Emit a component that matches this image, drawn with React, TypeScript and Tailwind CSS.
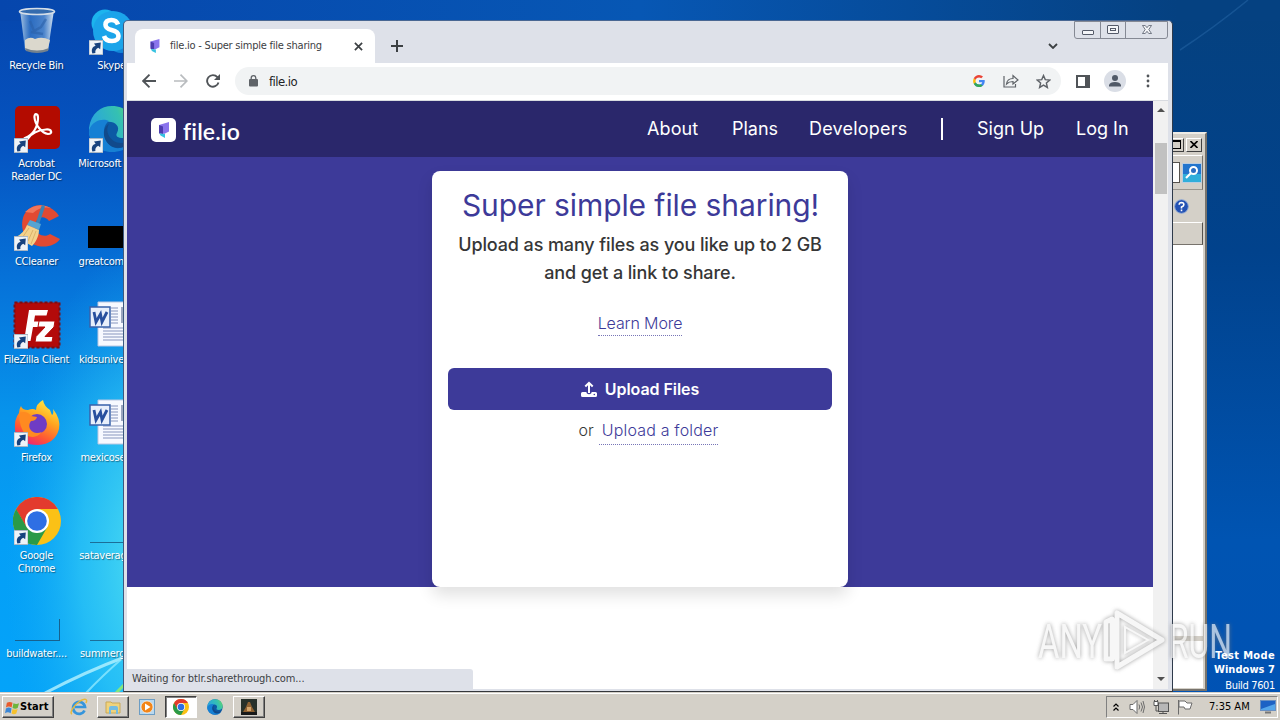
import type { ReactNode } from 'react';

type DesktopItem = {
  label: string;
  icon: ReactNode;
  shortcut?: boolean;
};

function ShortcutArrow() {
  return (
    <svg viewBox="0 0 14 14" className="absolute bottom-0 left-[1px] h-[15px] w-[14px]">
      <rect width="14" height="14" fill="#eef3f8" stroke="#a9b6c4" />
      <path d="M3.4 13C2 9 3.4 6 6.6 5.2L5 3.1 11.8 2 11.2 8.8 9.2 7.2C6.8 8.4 6 10 6.4 12.4Z" fill="#17427e" />
    </svg>
  );
}

function RecycleBinIcon() {
  return (
    <svg viewBox="0 0 48 48" className="h-12 w-12">
      <defs>
        <linearGradient id="bin" x1="0" x2="1">
          <stop offset="0" stopColor="#b9d2e8" stopOpacity=".9" />
          <stop offset=".3" stopColor="#3c7cc8" stopOpacity=".7" />
          <stop offset=".7" stopColor="#5b92d2" stopOpacity=".8" />
          <stop offset="1" stopColor="#dbe8f3" />
        </linearGradient>
      </defs>
      <path d="M7 3 12 43Q24 48 35 43L41 3Z" fill="url(#bin)" />
      <path d="M12 33Q17 29 22 32 29 29 37 33L35 42Q24 47 12 42Z" fill="#dbd8cd" />
      <path d="M12 41Q24 46 36 41L35 44Q24 48 13 44Z" fill="#74818d" />
      <path d="M17 14 21 24 28 20 33 12M18 25 30 27" stroke="#2b61a8" strokeWidth="2.4" fill="none" opacity=".6" />
      <ellipse cx="24" cy="4.5" rx="17.5" ry="3" fill="#356cae" stroke="#d5dee7" strokeWidth="1.6" />
    </svg>
  );
}

function SkypeIcon() {
  return (
    <svg viewBox="0 0 48 48" className="h-12 w-12">
      <circle cx="17" cy="16" r="13.500" fill="#1cb4ee" />
      <circle cx="33" cy="33" r="13" fill="#1386d8" />
      <circle cx="25" cy="24" r="20" fill="#1ba4ea" />
      <path d="M30 17.5Q28.5 13 23.5 13 17.5 13 17.5 17.8 17.5 21.5 23.5 23 30.5 24.6 30.5 29 30.5 34 24 34 17.5 34 16 29" fill="none" stroke="#fff" strokeWidth="4.6" />
    </svg>
  );
}

function AcrobatIcon() {
  return (
    <svg viewBox="0 0 48 48" className="h-12 w-12">
      <rect x="2" y="1" width="45" height="43" rx="5" fill="#b30b00" />
      <path
        d="M12 33C20 30 25 22 25 13 25 8 21 8 21.5 12.5 22 20 29 28 35 29 40 29 39 24 33 24.5 25 25 18 29 14.500 34 11 38 9 35 12 33Z"
        fill="none"
        stroke="#fff"
        strokeWidth="2.2"
      />
    </svg>
  );
}

function EdgeIcon({ className = 'h-12 w-12' }: { className?: string }) {
  return (
    <svg viewBox="0 0 48 48" className={className}>
      <defs>
        <linearGradient id="edgeTop" x1="0" x2="1" y1=".3">
          <stop offset="0" stopColor="#2aa5dc" />
          <stop offset=".6" stopColor="#35c1b1" />
          <stop offset="1" stopColor="#6bdc5a" />
        </linearGradient>
      </defs>
      <circle cx="24" cy="24" r="23" fill="#0c59a4" />
      <path d="M1 23C3 8 13 1 24 1 38 1 47 11 47 22 47 29 42 33 35 33 30 33 27 31 29 28 33 21 26 16 19 17 10 18 4 25 1 31Z" fill="url(#edgeTop)" />
      <path d="M1 25C5 15 15 13 21 16 14 21 14 34 23 41 28 45 37 43 43 38 38 45 31 47 24 47 10 47 0 37 1 25Z" fill="#1680d4" />
      <path d="M21 19C16 27 23 38 33 38 38 38 42 37 44 35 40 42 30 45 23 41 14 35 14 23 21 19Z" fill="#114a8b" />
    </svg>
  );
}

function CCleanerIcon() {
  return (
    <svg viewBox="0 0 48 48" className="h-12 w-12">
      <path
        d="M46 13C37 -1 18 -1 11 12 6 24 11 40 25 43 34 45 43 42 47 36L37 31C32 35 23 32 22 24 22 14 31 11 36 18Z"
        fill="#e24a32"
      />
      <path d="M12 9Q24 -2 38 5 28 3 20 10Z" fill="#f0765b" />
      <path d="M30 4 25 19" stroke="#3b83b5" strokeWidth="3.5" strokeLinecap="round" />
      <path d="M17 17 28 21 26 27 14 22Z" fill="#55a4d2" />
      <path d="M14 22 26 27C26 34 22 40 19 43L3 34Q11 30 14 22Z" fill="#f3d28c" />
      <path d="M16 25 9 35M20 27 15 38M23 28 18 41" stroke="#dcb26a" strokeWidth="1" />
    </svg>
  );
}

function FileZillaIcon() {
  return (
    <svg viewBox="0 0 48 48" className="h-12 w-12">
      <rect x="1.500" y="1.500" width="45" height="45" fill="#b30a0a" stroke="#7c0d12" strokeWidth="2" strokeDasharray="3 2" />
      <path d="M11 40 16 9H35L33.500 14.500H22L21 20.500H30L29 26H20L17.500 40Z" fill="#fff" />
      <path d="M26 20H42L41 26 32 35.500H40L39 41H22L23 35.500 32 26H25Z" fill="#fff" stroke="#b30a0a" strokeWidth="1" />
    </svg>
  );
}

function FirefoxIcon() {
  return (
    <svg viewBox="0 0 48 48" className="h-12 w-12">
      <defs>
        <linearGradient id="fox" x1=".8" x2=".3" y1="0" y2="1">
          <stop offset="0" stopColor="#fff04a" />
          <stop offset=".4" stopColor="#ffa620" />
          <stop offset=".75" stopColor="#ff5634" />
          <stop offset="1" stopColor="#ed2278" />
        </linearGradient>
      </defs>
      <path
        d="M8 7Q9 11 15 11 20 9 23 11 23 5 30 1 31 7 37 11 38 14 39 16 41 15 40 10 48 20 46 30 42 45 25 46 7 46 2 32 1 20 6 14 6 10 8 7Z"
        fill="url(#fox)"
      />
      <circle cx="24" cy="25" r="10" fill="#6f3cc4" />
      <path d="M6 14Q14 11 18 17L24 18Q23 22 18 22 15 26 17 30 21 36 29 33 22 41 13 36 6 29 6 14Z" fill="#ff8a20" />
    </svg>
  );
}

function ChromeIcon({ className = 'h-12 w-12' }: { className?: string }) {
  return (
    <svg viewBox="0 0 48 48" className={className}>
      <circle cx="24" cy="24" r="24" fill="#fbc116" />
      <path d="M3.200 12A24 24 0 0 0 24 48L34.400 30 24 36 13.600 30Z" fill="#2a9a48" />
      <path d="M3.200 12 13.600 30 24 24 24 12Z" fill="#2a9a48" />
      <path d="M3.200 12A24 24 0 0 1 44.800 12H24L13 20Z" fill="#e33b2e" />
      <path d="M3.200 12 13.600 30 14 18Z" fill="#e33b2e" />
      <circle cx="24" cy="24" r="12" fill="#fff" />
      <circle cx="24" cy="24" r="9.800" fill="#2e6fe4" />
    </svg>
  );
}

function WordIcon() {
  return (
    <svg viewBox="0 0 48 48" className="h-12 w-12">
      <path d="M10 1H46V45H10Z" fill="#f7f9ff" stroke="#bac7e2" />
      <path d="M23 7H30M23 10H30M23 13H30M23 16H30M23 19H30M23 22H30M15 27H44M15 30H44M15 33H44M15 36H44M15 39H44" stroke="#8795bd" />
      <path d="M33 6H44V22H33Z" fill="#9ba6bf" />
      <rect x="2" y="6" width="20" height="20" fill="#e8effb" stroke="#3962ab" strokeWidth="1.500" />
      <path d="M6 11 8 21 12.500 13 14 21 19 11" fill="none" stroke="#274f9e" strokeWidth="2.800" />
    </svg>
  );
}

function BlackIcon() {
  return (
    <div className="pt-[23px]">
      <div className="h-[22px] w-12 bg-black" />
    </div>
  );
}

function ThinIcon() {
  return <div className="ml-0.5 h-[46px] w-[46px] border-b border-[#1c6e98]" />;
}

function EmptyFileIcon() {
  return (
    <div className="flex h-[46px] w-12 items-end pl-0.5">
      <div className="h-[22px] w-[45px] border-r border-b border-[#17618e]" />
    </div>
  );
}

const leftColumn: DesktopItem[] = [
  { label: 'Recycle Bin', icon: <RecycleBinIcon /> },
  { label: 'Acrobat\nReader DC', icon: <AcrobatIcon />, shortcut: true },
  { label: 'CCleaner', icon: <CCleanerIcon />, shortcut: true },
  { label: 'FileZilla Client', icon: <FileZillaIcon />, shortcut: true },
  { label: 'Firefox', icon: <FirefoxIcon />, shortcut: true },
  { label: 'Google\nChrome', icon: <ChromeIcon />, shortcut: true },
  { label: 'buildwater....', icon: <EmptyFileIcon /> },
];

const rightColumn: DesktopItem[] = [
  { label: 'Skype', icon: <SkypeIcon />, shortcut: true },
  { label: 'Microsoft Ed...', icon: <EdgeIcon />, shortcut: true },
  { label: 'greatcompa...', icon: <BlackIcon /> },
  { label: 'kidsuniversi...', icon: <WordIcon /> },
  { label: 'mexicoserv...', icon: <WordIcon /> },
  { label: 'sataverage....', icon: <ThinIcon /> },
  { label: 'summergro...', icon: <ThinIcon /> },
];

function IconColumn({ items }: { items: DesktopItem[] }) {
  return (
    <div className="flex w-[74px] flex-col">
      {items.map((item) => (
        <div key={item.label} className="flex h-[98px] flex-col items-center">
          <div className="relative h-12 w-12">
            {item.icon}
            {item.shortcut && <ShortcutArrow />}
          </div>
          <p className="mt-1 mr-px text-center text-[11px] leading-[13px] tracking-[-0.25px] whitespace-pre text-white [text-shadow:1px_1px_1px_#00000070]">
            {item.label}
          </p>
        </div>
      ))}
    </div>
  );
}

function Wallpaper() {
  return (
    <svg viewBox="0 0 1280 720" className="absolute inset-0 h-full w-full">
      <defs>
        <linearGradient id="sky" x1="0" x2="0" y1="0" y2="1">
          <stop offset="0" stopColor="#0646ad" />
          <stop offset=".2" stopColor="#0553c0" />
          <stop offset=".4" stopColor="#0674da" />
          <stop offset=".58" stopColor="#0794ec" />
          <stop offset=".75" stopColor="#049ff6" />
          <stop offset="1" stopColor="#04a4fa" />
        </linearGradient>
        <linearGradient id="night" x1="0" x2="0" y1="0" y2="1">
          <stop offset="0" stopColor="#05417f" />
          <stop offset=".35" stopColor="#01428c" />
          <stop offset=".75" stopColor="#0054b2" />
          <stop offset="1" stopColor="#0052b4" />
        </linearGradient>
        <linearGradient id="top" x1="0" x2="1">
          <stop offset="0" stopColor="#0646ad" />
          <stop offset=".5" stopColor="#0757b4" />
          <stop offset=".92" stopColor="#054181" />
        </linearGradient>
        <radialGradient id="glow">
          <stop offset="0" stopColor="#55e2f0" />
          <stop offset=".5" stopColor="#35ccf5" stopOpacity=".65" />
          <stop offset="1" stopColor="#14a8f0" stopOpacity="0" />
        </radialGradient>
      </defs>
      <rect width="700" height="720" fill="url(#sky)" />
      <rect x="700" width="580" height="720" fill="url(#night)" />
      <rect width="1280" height="21" fill="url(#top)" />
      <ellipse cx="155" cy="560" rx="150" ry="320" fill="url(#glow)" />
      <path d="M45 693Q85 672 125 657" stroke="#b6f2ff" strokeWidth="3" fill="none" opacity=".8" />
      <path d="M86 693Q102 676 125 656" stroke="#8de9ff" strokeWidth="2" fill="none" opacity=".8" />
      <path d="M116 693 125 684" stroke="#83e87e" strokeWidth="3" />
      <path d="M1180 50Q1215 27 1248 0" stroke="#2868a8" strokeWidth="1.500" fill="none" opacity=".5" />
    </svg>
  );
}

function FileMark({ className }: { className: string }) {
  return (
    <svg viewBox="0 0 14 18" className={className}>
      <path d="M2 4 12 1V10.500L7 13 2 11Z" fill="#8a74ec" />
      <path d="M2 4 6 5.500V13L2 12.500Z" fill="#4c3cae" />
      <path d="M2.500 12.500 8 13V17L3.500 14.500Z" fill="#35c2e0" />
    </svg>
  );
}

function ExplorerWindow() {
  return (
    <div className="absolute top-[132px] left-[900px] flex h-[559px] w-[307px] flex-col border-2 border-t-[#eeece6] border-r-[#77736c] border-b-[#77736c] border-l-white bg-[#d4d0c8] pr-0.5">
      <div className="flex h-[21px] items-center justify-end gap-0.5 pr-px">
        {['max', 'close'].map((name) => (
          <div key={name} className="flex h-[14px] w-4 items-center justify-center border border-t-white border-r-[#404040] border-b-[#404040] border-l-white bg-[#d4d0c8]">
            {name === 'max' ? (
              <div className="h-[9px] w-[9px] border border-t-2 border-black" />
            ) : (
              <svg viewBox="0 0 8 7" className="h-[7px] w-2">
                <path d="M.5 0 7.500 7M7.500 0 .5 7" stroke="#000" strokeWidth="1.600" />
              </svg>
            )}
          </div>
        ))}
      </div>
      <div className="flex h-[35px] items-center justify-end border border-white border-r-[#77736c] border-b-[#9a968e]">
        <div className="h-[21px] w-20 border border-[#55524d] bg-white" />
        <svg viewBox="0 0 20 20" className="ml-0.5 h-5 w-5">
          <rect x=".5" y=".5" width="19" height="19" fill="#2275cd" stroke="#b9cce0" />
          <path d="M1 11H19V19H1Z" fill="#30aeda" />
          <circle cx="11.500" cy="7.500" r="3.500" fill="#2b6dc0" stroke="#fff" strokeWidth="2" />
          <path d="M9 10 4 15" stroke="#fff" strokeWidth="2.200" />
        </svg>
      </div>
      <div className="flex h-8 items-center justify-end pr-3.5">
        <svg viewBox="0 0 16 16" className="h-[15px] w-[15px]">
          <circle cx="8" cy="8" r="7.300" fill="#2452b4" stroke="#8fa9d4" />
          <path d="M5.500 6.200Q5.600 3.800 8 3.800 10.500 3.900 10.500 6 10.500 7.300 8 8.600V10M8 11.300V13" fill="none" stroke="#fff" strokeWidth="1.700" />
        </svg>
      </div>
      <div className="h-[23px] border border-t-white border-r-[#55524d] border-b-[#77736c] border-l-white" />
      <div className="grow bg-white pt-[391px]">
        <div className="h-[5px] bg-[#d4d0c8]" />
      </div>
      <div className="h-px bg-[#d4d0c8]" />
    </div>
  );
}

function TabStrip() {
  return (
    <div className="relative flex h-[41px] items-end bg-[#dee1e9] pl-[9px]">
      <div className="flex h-[34px] w-60 items-center rounded-t-lg bg-white pl-[13px]">
        <FileMark className="h-4 w-3.5" />
        <span className="mt-px ml-2 w-[184px] text-[11px] tracking-[-0.23px] whitespace-nowrap text-[#3c4043]">file.io - Super simple file sharing</span>
        <svg viewBox="0 0 10 10" className="h-[9px] w-[9px]">
          <path d="M1 1 9 9M9 1 1 9" stroke="#3c4043" strokeWidth="1.900" />
        </svg>
      </div>
      <svg viewBox="0 0 12 12" className="mb-[11px] ml-4 h-3 w-3">
        <path d="M6 0V12M0 6H12" stroke="#3c4043" strokeWidth="2" />
      </svg>
      <svg viewBox="0 0 10 6" className="mr-[112px] mb-3.5 ml-auto h-1.5 w-2.5">
        <path d="M1 1 5 5 9 1" fill="none" stroke="#3c4043" strokeWidth="1.800" />
      </svg>
      <div className="absolute -top-px right-0.5 flex h-[18px] w-[94px] rounded-b-[3px] border border-[#858994]">
        <div className="flex w-[26px] justify-center border-r border-[#858994] pt-2">
          <div className="h-[5px] w-3 rounded-[1px] border border-[#555b69] bg-[#f4f5f8]" />
        </div>
        <div className="flex w-[25px] justify-center border-r border-[#858994] pt-[3px]">
          <div className="flex h-[9px] w-3 items-center justify-center rounded-[1px] border border-[#555b69] bg-[#f4f5f8]">
            <div className="h-[3px] w-1.5 border border-[#555b69]" />
          </div>
        </div>
        <svg viewBox="0 0 12 10" className="mt-[3px] ml-[15px] h-[9px] w-3">
          <path d="M1 .5H4L6 3 8 .5H11L8 5 11 9.500H8L6 7 4 9.500H1L4 5Z" fill="#f4f5f8" stroke="#555b69" strokeWidth=".9" />
        </svg>
      </div>
    </div>
  );
}

function Toolbar() {
  return (
    <div className="flex h-[38px] items-center border-b border-[#d8dbe0] bg-white pr-[18px] pb-px pl-[15px]">
      <svg viewBox="0 0 14 14" className="h-3.5 w-3.5" fill="none" stroke="#505458" strokeWidth="1.900">
        <path d="M14 7H1.500M7.500.7 1.200 7 7.500 13.300" />
      </svg>
      <svg viewBox="0 0 14 14" className="ml-[18px] h-3.5 w-3.5" fill="none" stroke="#b9bcbf" strokeWidth="1.700">
        <path d="M0 7H12.500M6.500.7 12.800 7 6.500 13.300" />
      </svg>
      <svg viewBox="0 0 14 14" className="ml-[18px] h-3.5 w-3.5">
        <path d="M12.500 8.500A5.800 5.800 0 1 1 11.400 3.200L12.500 4.500" fill="none" stroke="#505458" strokeWidth="1.900" />
        <path d="M14 0V6H8Z" fill="#505458" />
      </svg>
      <div className="ml-[15px] flex h-7 w-[826px] items-center rounded-full bg-[#f1f3f4] pr-2.5 pl-3.5">
        <svg viewBox="0 0 9 12" className="h-3 w-[9px]">
          <rect y="4" width="9" height="7.500" rx="1" fill="#5f6368" />
          <path d="M2.200 5V3A2.300 2.300 0 0 1 6.800 3V5" fill="none" stroke="#5f6368" strokeWidth="1.300" />
        </svg>
        <span className="mt-0.5 ml-[11px] grow text-[13px] tracking-[-0.55px] text-[#202124]">file.io</span>
        <svg viewBox="0 0 48 48" className="h-3 w-3">
          <path d="M24 19.500V28.500H37C35.500 34 31 38 24 38 18 38 13 34.500 11 29L3 35C7 43 15 48 24 48 37 48 47 39 47 24Q47 21.500 46.500 19.500Z" fill="#4285f4" />
          <path d="M11 29 3 35C7 43 15 48 24 48 30 48 35 46 39 43L31 36.500C23 40 14 37 11 29Z" fill="#34a853" />
          <path d="M3 13Q-2 24 3 35L11 29Q9.500 24 11 19Z" fill="#fbbc05" />
          <path d="M3 13C7 5 15 0 24 0Q33.500 0 40 6L33 13Q29.500 10 24 10C18 10 13 13.500 11 19Z" fill="#ea4335" />
        </svg>
        <svg viewBox="0 0 16 14" className="ml-[18px] h-3.5 w-4" fill="none" stroke="#5f6368" strokeWidth="1.200">
          <path d="M1 2V13H12.500V10M3.500 10C4 6 7 4.500 10 4.500V1.500L15 6 10 10V7.500C7.500 7.500 5.500 8 3.500 10Z" />
        </svg>
        <svg viewBox="0 0 24 24" className="ml-[17px] h-[15px] w-[15px]" fill="none" stroke="#5f6368" strokeWidth="2.300">
          <path d="M12 2.500 14.800 9 22 9.700 16.600 14.400 18.200 21.500 12 17.800 5.800 21.500 7.400 14.400 2 9.700 9.200 9Z" />
        </svg>
      </div>
      <div className="ml-[15px] h-[13px] w-3.5 border-2 border-r-[5px] border-[#505458]" />
      <div className="ml-3.5 h-[22px] w-[22px] rounded-full bg-[#dadee6]">
        <svg viewBox="0 0 22 22" className="h-full w-full" fill="#505967">
          <circle cx="11" cy="8" r="3" />
          <path d="M5 16.500V15Q6 12 11 12T17 15V16.500Z" />
        </svg>
      </div>
      <svg viewBox="0 0 4 14" className="ml-auto h-3.5 w-1" fill="#505458">
        <circle cx="2" cy="2" r="1.400" />
        <circle cx="2" cy="7" r="1.400" />
        <circle cx="2" cy="12" r="1.400" />
      </svg>
    </div>
  );
}

function FileIoPage() {
  return (
    <div className="relative flex w-[1026px] flex-col overflow-hidden bg-white font-[Inter,sans-serif]">
      <nav className="flex h-14 items-center bg-[#2a276b] pr-[23px] pb-px pl-6 text-[18px] text-white">
        <div className="mt-[3px] flex h-6 w-[25px] items-center justify-center rounded-[5px] bg-white">
          <FileMark className="h-[18px] w-3.5" />
        </div>
        <span className="mt-1 ml-[7px] font-[Lato,sans-serif] text-[23px] leading-6 font-semibold tracking-[0.15px]">file.io</span>
        <div className="ml-auto flex items-center">
          <a className="w-[85px] tracking-[0.1px]">About</a>
          <a className="w-[77px]">Plans</a>
          <a className="w-[132px] tracking-[0.2px]">Developers</a>
          <div className="h-[22px] w-0.5 bg-white" />
          <a className="ml-[34px] w-[99px]">Sign Up</a>
          <a className="w-[54px] whitespace-nowrap">Log In</a>
        </div>
      </nav>
      <main className="flex h-[430px] shrink-0 justify-center bg-[#3d3a99] pt-3.5">
        <section className="flex h-[416px] w-[416px] shrink-0 flex-col items-center rounded-lg bg-white px-4 text-[#363636] shadow-[0_8px_16px_#0000001f]">
          <h1 className="mt-3.5 pl-px text-[30px] leading-10 tracking-[-0.08px] whitespace-nowrap text-[#3d3a99]">Super simple file sharing!</h1>
          <p className="mt-1.5 text-center text-[18px] leading-7 font-medium tracking-[-0.12px] whitespace-nowrap">
            Upload as many files as you like up to 2 GB
            <br />
            and get a link to share.
          </p>
          <a className="mt-[27px] h-[22px] border-b border-dotted border-[#3d3a99]/70 text-[16px] leading-[19px] font-light tracking-[-0.1px] whitespace-nowrap text-[#3d3a99]">
            Learn More
          </a>
          <button className="mt-8 flex h-[42px] w-full items-center justify-center gap-2 rounded-md bg-[#3d3a99] text-[16px] font-semibold tracking-[-0.05px] text-white">
            <svg viewBox="0 0 16 16" className="h-4 w-4">
              <path d="M8 12V2M4.300 5.500 8 1.800 11.700 5.500" fill="none" stroke="#fff" strokeWidth="2" />
              <path d="M1.500 11H5.500V12Q8 14.500 10.500 12V11H14.500Q16 11 16 12.500V14.500Q16 16 14.500 16H1.500Q0 16 0 14.500V12.500Q0 11 1.500 11Z" fill="#fff" />
              <circle cx="13.300" cy="13.500" r=".8" fill="#3d3a99" />
            </svg>
            Upload Files
          </button>
          <div className="mt-2.5 flex gap-[5px] pl-[17px] text-[16px] leading-[21px] font-light whitespace-nowrap">
            or
            <a className="h-[25px] border-b border-dotted border-[#3d3a99]/70 pl-[3px] tracking-[0.17px] text-[#3d3a99]">Upload a folder</a>
          </div>
        </section>
      </main>
      <div className="absolute bottom-0 left-0 flex h-5 w-[346px] items-center rounded-tr-[3px] bg-[#dee1e9] pt-px pl-[5px] font-['DejaVu_Sans_Condensed','DejaVu_Sans',sans-serif] text-[11px] tracking-[-0.1px] text-[#3c4043]">
        Waiting for btlr.sharethrough.com...
      </div>
    </div>
  );
}

function BrowserWindow() {
  return (
    <div className="absolute top-5 left-[123px] flex h-[672px] w-[1050px] flex-col rounded-t-[5px] border border-t-[#496793] border-r-[#2e3a4b] border-b-[#35383d] border-l-[#3d5a80] bg-[#dee1e9] pt-px pr-0.5 pb-0.5 pl-0.5">
      <TabStrip />
      <div className="mr-0.5 ml-px flex grow flex-col">
        <Toolbar />
        <div className="flex h-[588px]">
          <FileIoPage />
          <div className="flex grow flex-col items-center bg-[#f1f1f1]">
            <div className="mt-[7px] border-x-4 border-b-4 border-x-transparent border-b-[#505050]" />
            <div className="mt-[31px] h-[51px] w-3 bg-[#c1c1c1]" />
            <div className="mt-auto mb-2 border-x-4 border-t-4 border-x-transparent border-t-[#505050]" />
          </div>
        </div>
      </div>
    </div>
  );
}

function Watermark() {
  return (
    <svg viewBox="0 0 200 70" className="absolute top-[605px] left-[1036px] h-[70px] w-[200px] opacity-70 drop-shadow-[0_0_2px_#777777]">
      <g fill="#f4f4f4" fontFamily="Roboto, sans-serif" fontSize="49">
        <text x="2" y="53" textLength="64" lengthAdjust="spacingAndGlyphs">ANY</text>
        <text x="133" y="53" textLength="63" lengthAdjust="spacingAndGlyphs">RUN</text>
      </g>
      <path d="M81 8V62L126 35ZM70 17V54H76V14Z" fill="none" stroke="#f4f4f4" strokeWidth="5" strokeLinejoin="round" />
      <path d="M89 22V48L112 35Z" fill="none" stroke="#f4f4f4" strokeWidth="2" />
    </svg>
  );
}

function Taskbar() {
  return (
    <div className="absolute inset-x-0 bottom-0 flex h-7 items-center border-t border-[#d4d0c8] bg-[#d4d0c8] pr-0.5 pl-0.5 text-[11px] text-black shadow-[inset_0_1px_0_#fff]">
      <div className="mt-px flex h-[22px] w-[52px] items-center border border-t-white border-r-[#404040] border-b-[#404040] border-l-white pl-0.5 font-bold shadow-[inset_-1px_-1px_0_#808080]">
        <svg viewBox="0 0 16 16" className="h-[15px] w-[15px]">
          <path d="M2 3Q5 1 8 3L7 8Q4 6 1 8Z" fill="#e85b2c" />
          <path d="M9 3.500Q12 5 15 3.500L13.500 8.500Q11 10 8 8.500Z" fill="#6eb53a" />
          <path d="M1 9Q4 7 7 9L6 14Q3 12 0 14Z" fill="#3b87d6" />
          <path d="M8 9.500Q10.500 11 13.500 9.500L12 14.500Q9.500 16 7 14.500Z" fill="#f6c12c" />
        </svg>
        <span className="mt-px tracking-[0.1px]">Start</span>
      </div>
      <svg viewBox="0 0 18 18" className="mt-px ml-4 h-[18px] w-[18px]">
        <path d="M14.500 12.500A6 6 0 1 1 15 9H5" fill="none" stroke="#3595dc" strokeWidth="2.700" />
        <path d="M2 16C-1 15 4 7 10 3 15 0 18 1 16 5" fill="none" stroke="#e7b93d" strokeWidth="1.500" />
      </svg>
      <div className="mt-px ml-[9px] flex h-[22px] w-8 items-center justify-center border border-t-white border-r-[#404040] border-b-[#404040] border-l-white shadow-[inset_-1px_-1px_0_#808080]">
        <svg viewBox="0 0 16 16" className="h-4 w-4">
          <path d="M1 3H6L7 4H15V14H1Z" fill="#f0d37c" stroke="#c9a958" />
          <path d="M4 15V9Q4 7 6 7H11Q13 7 13 9V15H11V11H6V15Z" fill="#74bce2" />
        </svg>
      </div>
      <svg viewBox="0 0 16 16" className="mt-px ml-2.5 h-4 w-4">
        <rect x=".5" y=".5" width="15" height="15" fill="#b9d8ee" stroke="#6c9dc4" />
        <circle cx="8" cy="8" r="6" fill="#f28518" stroke="#fff" strokeWidth=".6" />
        <path d="M6 4.500 11.500 8 6 11.500Z" fill="#fff" />
      </svg>
      <div className="mt-px ml-2.5 flex h-[22px] w-8 items-center justify-center border border-t-[#404040] border-r-white border-b-white border-l-[#404040] bg-white shadow-[inset_1px_1px_0_#808080]">
        <ChromeIcon className="h-4 w-4" />
      </div>
      <EdgeIcon className="mt-px ml-2.5 h-4 w-4" />
      <div className="mt-px ml-2.5 flex h-[22px] w-8 items-center justify-center border border-t-white border-r-[#404040] border-b-[#404040] border-l-white shadow-[inset_-1px_-1px_0_#808080]">
        <svg viewBox="0 0 16 16" className="h-4 w-4">
          <rect width="16" height="16" fill="#27312a" />
          <path d="M2 13 5 8 7 3H9L11 8 14 13Z" fill="#8f6232" />
          <path d="M6 8H10V12H6Z" fill="#d3a56a" />
          <path d="M0 13H16V16H0Z" fill="#17191a" />
        </svg>
      </div>
      <div className="mt-px ml-auto flex h-[22px] w-[172px] items-center border border-t-[#808080] border-r-white border-b-white border-l-[#808080] pl-1.5">
        <svg viewBox="0 0 6 8" className="h-2 w-1.5" fill="none" stroke="#000" strokeWidth="1.200">
          <path d="M.5 3.500 3 1 5.500 3.500M.5 7.500 3 5 5.500 7.500" />
        </svg>
        <svg viewBox="0 0 16 16" className="ml-2.5 h-4 w-4" stroke="#6b6b6b" fill="none">
          <path d="M1 5.500H4L8 1.500V14.500L4 10.500H1Z" fill="#fff" />
          <path d="M10 5.500Q11.500 8 10 10.500M12 3.500Q15 8 12 12.500M14 2Q17 8 14 14" />
        </svg>
        <svg viewBox="0 0 16 16" className="ml-2 h-4 w-4" stroke="#555">
          <rect x="5.500" y="4" width="10" height="8.500" fill="#b7b7b7" />
          <path d="M3 6V12H6M6 14.500H14M10 12V14" fill="none" />
          <path d="M1 2.500H5V6.500H1ZM1.500 1V2.500M4.500 1V2.500" fill="#fff" />
        </svg>
        <svg viewBox="0 0 16 16" className="ml-2 h-4 w-4">
          <path d="M1.500 1V15.500M2 2H8L10 4H15L13 10H8L7 8H2Z" fill="#fff" stroke="#6b6b6b" />
        </svg>
        <span className="mt-px ml-4 whitespace-nowrap">7:35 AM</span>
        <svg viewBox="0 0 16 14" className="mr-px ml-auto h-3.5 w-4">
          <rect x=".5" y=".5" width="15" height="10" fill="#1d62c4" stroke="#6b90c0" />
          <path d="M1 9 15 4V10H1Z" fill="#55a6ea" />
          <path d="M5 12.500H11" stroke="#777" strokeWidth="2" />
        </svg>
      </div>
    </div>
  );
}

export default function App() {
  return (
    <div className="relative h-[720px] w-[1280px] overflow-hidden bg-[#0058bd] font-['DejaVu_Sans_Condensed','DejaVu_Sans',sans-serif]">
      <Wallpaper />
      <div className="relative flex gap-px pt-[7px]">
        <IconColumn items={leftColumn} />
        <IconColumn items={rightColumn} />
      </div>
      <ExplorerWindow />
      <BrowserWindow />
      <Watermark />
      <div className="absolute right-[5px] bottom-[26px] text-right text-[11px] text-white">
        <p className="leading-[14px] font-bold tracking-[0.35px]">Test Mode</p>
        <p className="leading-[14px] font-bold tracking-[0.05px]">Windows 7</p>
        <p className="leading-[17px] tracking-[-0.35px]">Build 7601</p>
      </div>
      <Taskbar />
    </div>
  );
}
